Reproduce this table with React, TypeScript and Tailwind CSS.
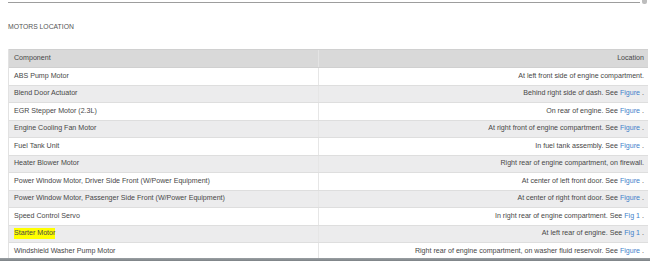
import React from "react";

type Row = { c: string; loc: string; link?: string; hl?: boolean };

const rows: Row[] = [
  { c: "ABS Pump Motor", loc: "At left front side of engine compartment." },
  { c: "Blend Door Actuator", loc: "Behind right side of dash. See ", link: "Figure" },
  { c: "EGR Stepper Motor (2.3L)", loc: "On rear of engine. See ", link: "Figure" },
  { c: "Engine Cooling Fan Motor", loc: "At right front of engine compartment. See ", link: "Figure" },
  { c: "Fuel Tank Unit", loc: "In fuel tank assembly. See ", link: "Figure" },
  { c: "Heater Blower Motor", loc: "Right rear of engine compartment, on firewall." },
  { c: "Power Window Motor, Driver Side Front (W/Power Equipment)", loc: "At center of left front door. See ", link: "Figure" },
  { c: "Power Window Motor, Passenger Side Front (W/Power Equipment)", loc: "At center of right front door. See ", link: "Figure" },
  { c: "Speed Control Servo", loc: "In right rear of engine compartment. See ", link: "Fig 1" },
  { c: "Starter Motor", loc: "At left rear of engine. See ", link: "Fig 1", hl: true },
  { c: "Windshield Washer Pump Motor", loc: "Right rear of engine compartment, on washer fluid reservoir. See ", link: "Figure" },
];

export default function App() {
  return (
    <div className="relative w-[650px] h-[261px] overflow-hidden bg-white font-['Liberation_Sans',Arial,sans-serif] text-[7.1px] text-[#474747]">
      <div className="absolute top-0 right-[3px] w-[5px] h-[4px] rounded-b-[2px] bg-[#bdbdbd]" />
      <div className="pl-[8px] pr-[2px]">
        <div className="mr-[8px] h-[3px] border-b border-[#9d9d9d]" />
        <div className="mt-[20px] leading-[8px] text-[6.8px] text-[#555]">MOTORS LOCATION</div>
        <div className="mt-[18px] w-[640px] border-l border-[#e2e2e2]">
          <div className="grid grid-cols-[310px_330px] h-[19px] bg-[#d9d9d9] border-y border-[#d0d0d0]">
            <div className="flex items-center pl-[5px] border-r border-[#e4e4e4]">Component</div>
            <div className="flex items-center justify-end pr-[5px]">Location</div>
          </div>
          {rows.map((r, i) => (
            <div
              key={i}
              className={`grid grid-cols-[310px_330px] h-[17.5px] border-b border-[#dedede] ${i % 2 === 1 ? "bg-[#ececed]" : "bg-white"}`}
            >
              <div className="flex items-center pl-[5px] border-r border-[#e6e6e6]">
                <span className={r.hl ? "bg-[#ffff00]" : ""}>{r.c}</span>
              </div>
              <div className="flex items-center justify-end pr-[5px] whitespace-pre">
                <span>{r.loc}</span>
                {r.link && <span className="text-[#3f7fcb]">{r.link}</span>}
                {r.link && <span> .</span>}
              </div>
            </div>
          ))}
        </div>
      </div>
      <div className="absolute left-0 right-0 bottom-0 h-[3.5px] bg-gradient-to-b from-[#9aa0a4] to-[#7d8286]" />
    </div>
  );
}
